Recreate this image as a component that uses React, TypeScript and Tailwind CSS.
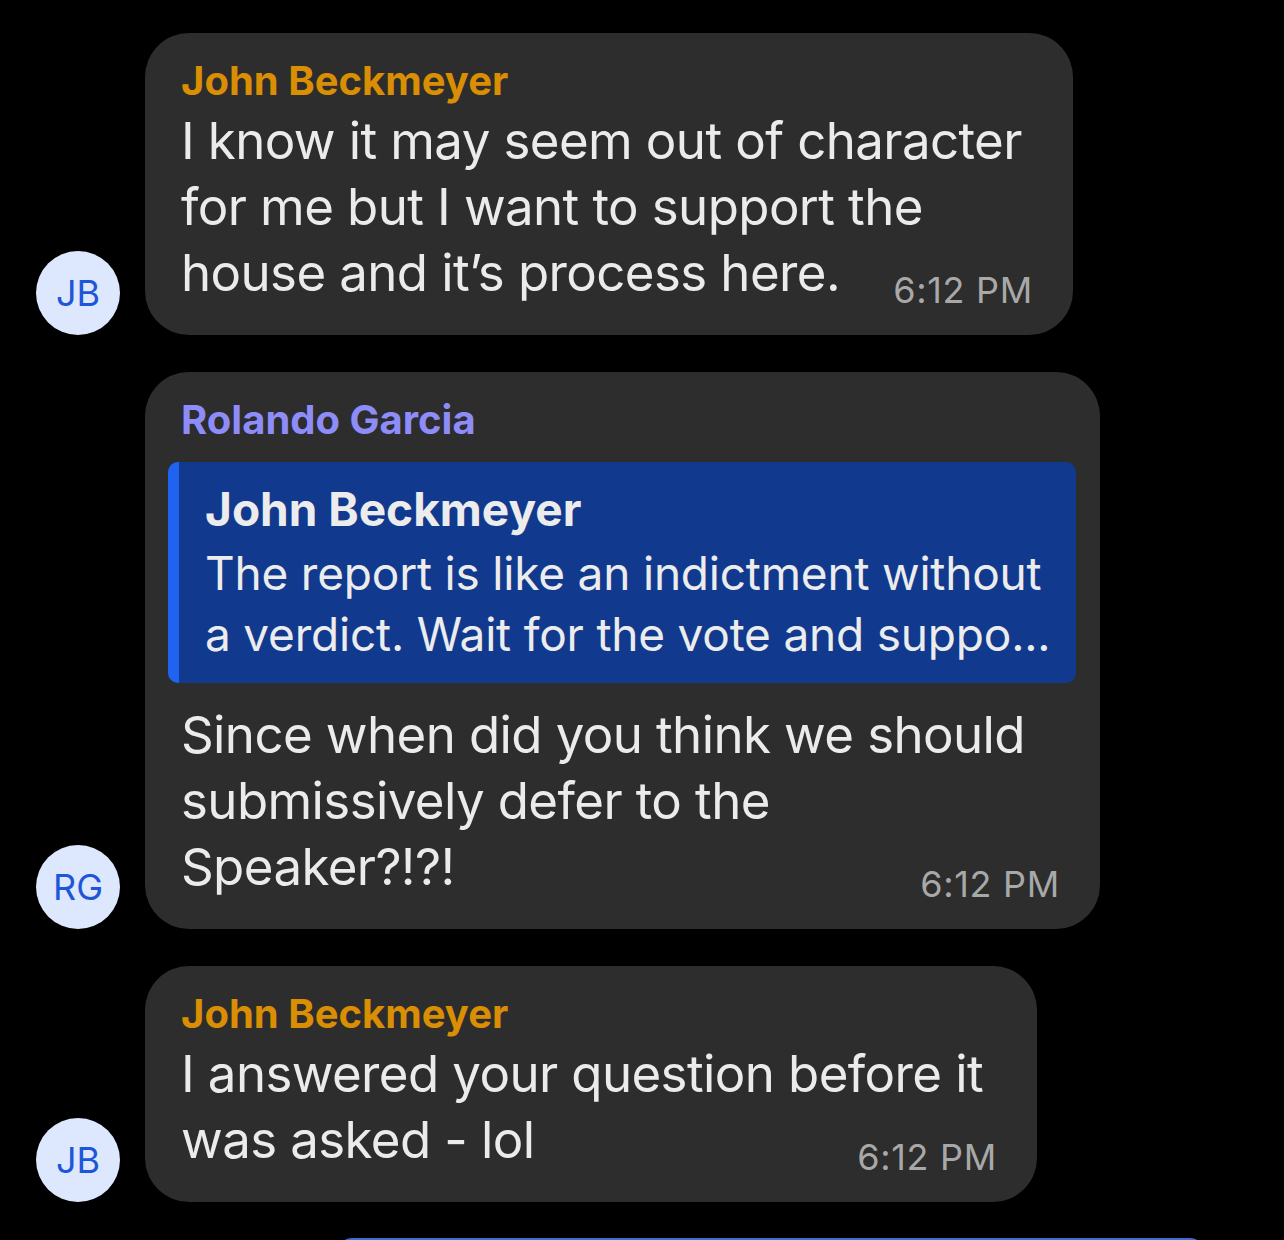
import type { ReactNode } from "react";

type Msg = {
  initials: string;
  name: string;
  nameColor: string;
  lines: string[];
  time: string;
  width: string;
  quote?: { name: string; lines: string[] };
};

const messages: Msg[] = [
  {
    initials: "JB",
    name: "John Beckmeyer",
    nameColor: "text-[#d98e04]",
    lines: [
      "I know it may seem out of character",
      "for me but I want to support the",
      "house and it’s process here.",
    ],
    time: "6:12 PM",
    width: "w-[928px]",
  },
  {
    initials: "RG",
    name: "Rolando Garcia",
    nameColor: "text-[#8e8cf8]",
    quote: {
      name: "John Beckmeyer",
      lines: [
        "The report is like an indictment without",
        "a verdict. Wait for the vote and suppo...",
      ],
    },
    lines: [
      "Since when did you think we should",
      "submissively defer to the",
      "Speaker?!?!",
    ],
    time: "6:12 PM",
    width: "w-[955px]",
  },
  {
    initials: "JB",
    name: "John Beckmeyer",
    nameColor: "text-[#d98e04]",
    lines: ["I answered your question before it", "was asked - lol"],
    time: "6:12 PM",
    width: "w-[892px]",
  },
];

export default function App() {
  return (
    <div className="h-[1240px] w-full overflow-hidden bg-black font-['Inter','Noto_Sans',sans-serif] antialiased">
      <div className="flex flex-col gap-[37px] pt-[33px]">
        {messages.map((m, i) => (
          <MessageRow key={i} msg={m} />
        ))}
      </div>
      {/* top edge of the composer / next element, cut off by the screen */}
      <div className="ml-[338px] mt-[36px] h-[20px] w-[866px] rounded-t-[14px] bg-[#3c6fd2]" />
    </div>
  );
}

function MessageRow({ msg }: { msg: Msg }) {
  const hasQuote = !!msg.quote;
  return (
    <div className="flex items-end gap-[25px] pl-[36px]">
      <Avatar initials={msg.initials} />
      <Bubble width={msg.width} wide={hasQuote}>
        <div className={hasQuote ? "pl-[13px]" : ""}>
          <div className={`text-[40px] font-bold leading-[46px] ${msg.nameColor}`}>
            {msg.name}
          </div>
        </div>

        {msg.quote && <Quote name={msg.quote.name} lines={msg.quote.lines} />}

        <div
          className={[
            "grid",
            hasQuote ? "mt-[19px] pl-[13px] pr-[16px]" : "mt-[4px]",
          ].join(" ")}
        >
          <div className="col-start-1 row-start-1 text-[51px] leading-[66px] tracking-[-0.6px] text-[#ebebeb]">
            {msg.lines.map((l, j) => (
              <div key={j}>{l}</div>
            ))}
          </div>
          <div className="col-start-1 row-start-1 self-end justify-self-end text-[36px] leading-[32px] tracking-[0.7px] text-[#a8a8a8]">
            {msg.time}
          </div>
        </div>
      </Bubble>
    </div>
  );
}

function Bubble({
  width,
  wide,
  children,
}: {
  width: string;
  wide: boolean;
  children: ReactNode;
}) {
  return (
    <div
      className={[
        width,
        "rounded-[44px] bg-[#2d2d2d] pb-[29px] pt-[25px]",
        wide ? "pl-[23px] pr-[24px]" : "pl-[36px] pr-[40px]",
      ].join(" ")}
    >
      {children}
    </div>
  );
}

function Quote({ name, lines }: { name: string; lines: string[] }) {
  return (
    <div className="mt-[19px] flex overflow-hidden rounded-[10px] bg-[#113a8f]">
      <div className="w-[11px] shrink-0 bg-[#1f63f0]" />
      <div className="pb-[18px] pl-[26px] pt-[19px]">
        <div className="text-[46px] font-bold leading-[56px] text-[#ececec]">{name}</div>
        <div className="mt-[6px] text-[46px] leading-[61px] tracking-[-0.2px] text-[#ececec]">
          {lines.map((l, j) => (
            <div key={j}>{l}</div>
          ))}
        </div>
      </div>
    </div>
  );
}

function Avatar({ initials }: { initials: string }) {
  return (
    <div className="flex h-[84px] w-[84px] shrink-0 items-center justify-center rounded-full bg-[#dde7fd] text-[36px] text-[#1d56d9]">
      {initials}
    </div>
  );
}
